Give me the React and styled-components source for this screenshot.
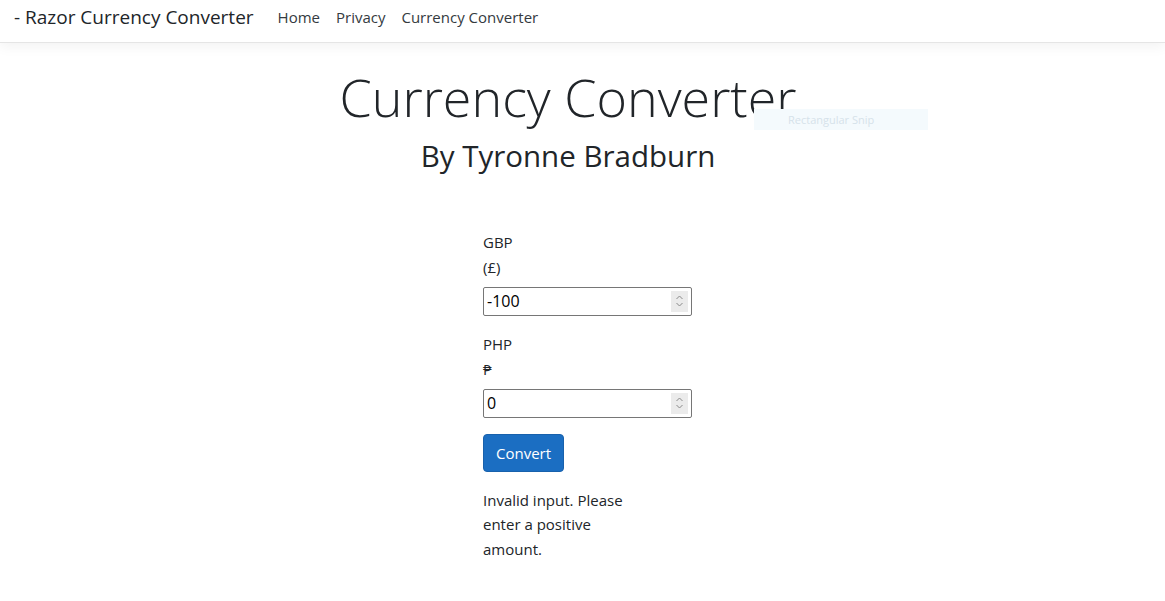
import React, { useState } from 'react';
import styled, { createGlobalStyle } from 'styled-components';

const GlobalStyle = createGlobalStyle`
  html, body {
    margin: 0;
    padding: 0;
    background: #ffffff;
  }
  body {
    font-family: "Open Sans", "Noto Sans", "Liberation Sans", sans-serif;
    font-size: 16px;
    line-height: 1.5;
    color: #212529;
  }
`;

const Page = styled.div`
  width: 1165px;
  height: 601px;
  overflow: hidden;
  position: relative;
`;

const NavBar = styled.nav`
  display: flex;
  align-items: center;
  box-sizing: border-box;
  height: 43px;
  padding: 0 14px 8px;
  border-bottom: 1px solid #e5e5e5;
  box-shadow: 0 0.25rem 0.75rem rgba(0, 0, 0, 0.05);
`;

const Brand = styled.a`
  font-size: 19px;
  color: #212529;
  text-decoration: none;
  margin-right: 24px;
  white-space: nowrap;
`;

const NavLinks = styled.div`
  display: flex;
  gap: 16px;
`;

const NavLink = styled.a`
  font-size: 15px;
  color: #343a40;
  text-decoration: none;
`;

const Main = styled.main`
  padding-right: 29px;
`;

const Header = styled.header`
  text-align: center;
  padding-top: 23px;
`;

const Title = styled.h1`
  margin: 0;
  font-size: 52px;
  font-weight: 300;
  line-height: 1.2;
`;

const Subtitle = styled.h2`
  margin: 0;
  font-size: 29.5px;
  font-weight: 400;
  line-height: 1.2;
  margin-top: 10px;
`;

const Form = styled.div`
  margin: 56px 0 0 483px;
  width: 209px;
  display: flex;
  flex-direction: column;
`;

const Field = styled.div`
  display: flex;
  flex-direction: column;
  margin-bottom: 16px;
`;

const Label = styled.label`
  font-size: 15px;
  line-height: 25px;
`;

const InputWrap = styled.div`
  position: relative;
  margin-top: 7px;
`;

const Input = styled.input`
  box-sizing: border-box;
  width: 209px;
  height: 29px;
  border: 1px solid #767676;
  border-radius: 2px;
  padding: 1px 24px 1px 3px;
  font-family: inherit;
  font-size: 16px;
  color: #000;
  outline: none;
`;

const Spinner = styled.span`
  position: absolute;
  right: 4px;
  top: 4px;
  width: 17px;
  height: 21px;
  background: #ebebeb;
  display: flex;
  align-items: center;
  justify-content: center;
`;

const Button = styled.button`
  align-self: flex-start;
  height: 38px;
  padding: 0 12px;
  background: #1b6ec2;
  border: 1px solid #1861ac;
  border-radius: 4px;
  color: #fff;
  font-family: inherit;
  font-size: 15px;
`;

const Message = styled.p`
  margin: 16px 0 0;
  width: 150px;
  font-size: 15px;
  line-height: 24.5px;
`;

const SnipHint = styled.div`
  position: absolute;
  left: 754px;
  top: 109px;
  width: 174px;
  height: 21px;
  background: #f4fafd;
  color: #d6e2ea;
  font-size: 11px;
  line-height: 21px;
  padding-left: 34px;
  box-sizing: border-box;
`;

const SpinIcon = () => (
  <svg width="9" height="14" viewBox="0 0 9 14" fill="none" stroke="#8a8a8a" strokeWidth="1">
    <path d="M1.5 5 L4.5 2 L7.5 5" />
    <path d="M1.5 9 L4.5 12 L7.5 9" />
  </svg>
);

const NumberField = ({ label, symbol, value, onChange }) => (
  <Field>
    <Label>{label}</Label>
    <Label>{symbol}</Label>
    <InputWrap>
      <Input value={value} onChange={e => onChange(e.target.value)} />
      <Spinner><SpinIcon /></Spinner>
    </InputWrap>
  </Field>
);

export default function App() {
  const [gbp, setGbp] = useState('-100');
  const [php, setPhp] = useState('0');
  return (
    <Page>
      <GlobalStyle />
      <NavBar>
        <Brand href="#">- Razor Currency Converter</Brand>
        <NavLinks>
          <NavLink href="#">Home</NavLink>
          <NavLink href="#">Privacy</NavLink>
          <NavLink href="#">Currency Converter</NavLink>
        </NavLinks>
      </NavBar>
      <Main>
        <Header>
          <Title>Currency Converter</Title>
          <Subtitle>By Tyronne Bradburn</Subtitle>
        </Header>
        <Form>
          <NumberField label="GBP" symbol="(£)" value={gbp} onChange={setGbp} />
          <NumberField label="PHP" symbol="₱" value={php} onChange={setPhp} />
          <Button>Convert</Button>
          <Message>Invalid input. Please enter a positive amount.</Message>
        </Form>
      </Main>
      <SnipHint>Rectangular Snip</SnipHint>
    </Page>
  );
}
